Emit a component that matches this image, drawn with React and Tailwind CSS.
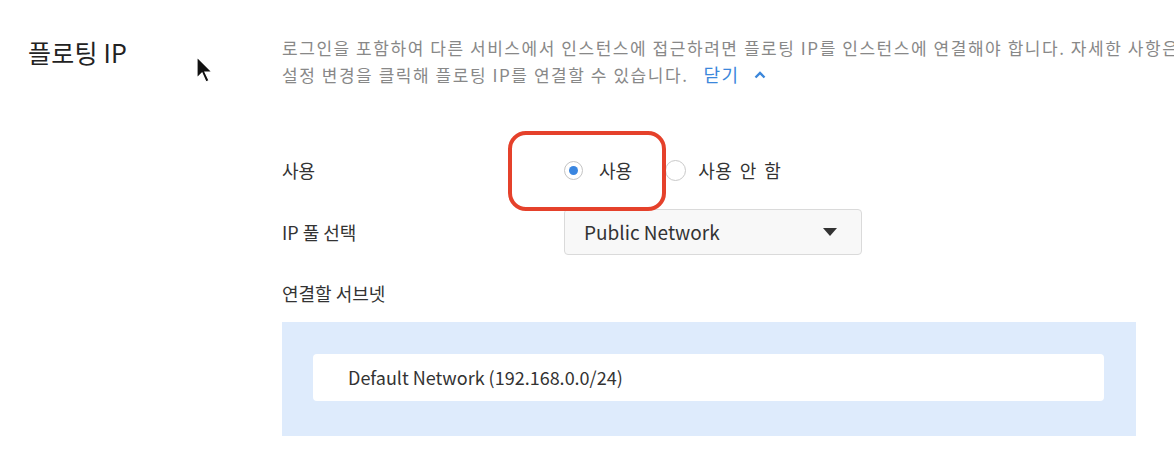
export default function App() {
  return (
    <div
      className="relative flex h-[472px] w-full overflow-hidden bg-white text-[#333]"
      style={{ fontFamily: '"Noto Sans CJK KR", "Noto Sans", sans-serif' }}
    >
      {/* left title column */}
      <div className="w-[282px] shrink-0 pl-[28px] pt-[37px]">
        <h2 className="text-[25px] leading-[30px] font-normal tracking-[0.2px] text-[#222]">플로팅 IP</h2>
      </div>

      {/* right content column */}
      <div className="min-w-0 flex-1 overflow-hidden pt-[34px]">
        <div className="whitespace-nowrap text-[17px] leading-[27px] tracking-[1.55px] text-[#888]">
          <p>
            로그인을 포함하여 다른 서비스에서 인스턴스에 접근하려면 플로팅 IP를 인스턴스에 연결해야 합니다. 자세한 사항은
          </p>
          <p className="flex items-center">
            설정 변경을 클릭해 플로팅 IP를 연결할 수 있습니다.
            <button className="ml-[15px] flex items-center gap-[14px] text-[18px] tracking-[1.5px] text-[#3b87db]">
              닫기
              <svg width="12" height="8" viewBox="0 0 12 8" fill="none">
                <path d="M1.5 6.5 6 2l4.5 4.5" stroke="#3b87db" strokeWidth="2.4" />
              </svg>
            </button>
          </p>
        </div>

        {/* 사용 */}
        <div className="mt-[70px] flex items-center text-[18px] leading-[24px]">
          <span className="w-[282px] shrink-0">사용</span>
          <label className="flex items-center gap-[16px]">
            <span className="flex size-[19px] items-center justify-center rounded-full border border-[#c4c4c4] bg-white">
              <span className="size-[9px] rounded-full bg-[#3a86e0]" />
            </span>
            <span>사용</span>
          </label>
          <label className="ml-[33px] flex items-center gap-[12px]">
            <span className="size-[21px] rounded-full border border-[#c9c9c9] bg-white" />
            <span className="tracking-[0.5px] [word-spacing:3px]">사용 안 함</span>
          </label>
        </div>

        {/* IP 풀 선택 */}
        <div className="mt-[27px] flex items-center text-[18px]">
          <span className="w-[282px] shrink-0">IP 풀 선택</span>
          <div className="flex h-[46px] w-[298px] items-center justify-between rounded-sm border border-[#dadada] bg-[#f8f8f8] pl-[19px] pr-[24px] text-[19px] text-[#333]">
            <span>Public Network</span>
            <svg width="14" height="8" viewBox="0 0 14 8">
              <path d="M0 0h14L7 8z" fill="#333" />
            </svg>
          </div>
        </div>

        {/* 연결할 서브넷 */}
        <div className="mt-[26px] text-[18px] leading-[24px]">연결할 서브넷</div>

        <div className="mt-[17px] h-[114px] w-[854px] bg-[#deebfc] px-[31px] pt-[32px]">
          <div className="flex h-[47px] w-[791px] items-center rounded-sm bg-white pl-[35px] text-[18px] text-[#333]">
            Default Network (192.168.0.0/24)
          </div>
        </div>
      </div>

      {/* annotation highlight */}
      <div className="pointer-events-none absolute left-[508px] top-[131px] h-[80px] w-[158px] rounded-[18px] border-[4px] border-[#e5412b]" />

      {/* mouse cursor */}
      <svg className="pointer-events-none absolute left-[195px] top-[55px]" width="18" height="30" viewBox="0 0 18 30">
        <path d="M2 2v21l5-5 4 9 3-1.5-4-8.5h7z" fill="#111" stroke="#fff" strokeWidth="1.2" />
      </svg>
    </div>
  );
}
